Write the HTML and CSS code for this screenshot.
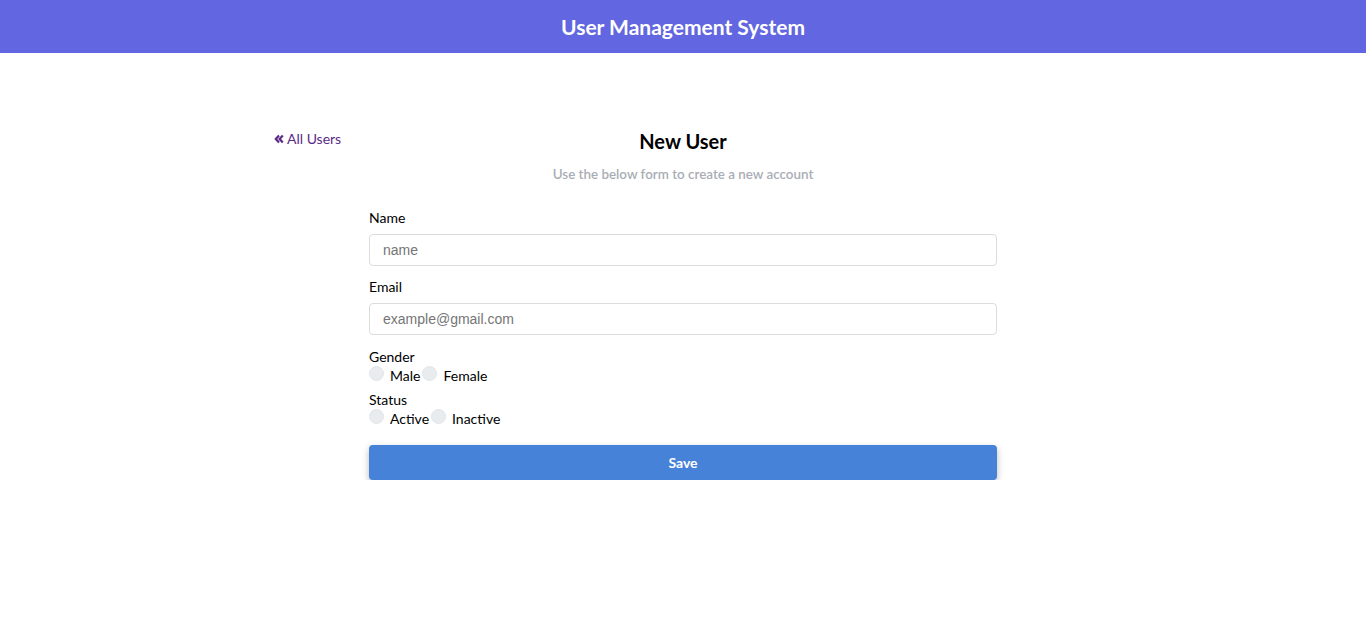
FILE: index.html
```html
<!DOCTYPE html>
<html>
<head>
<meta charset="utf-8">
<title>User Management System</title>
<link rel="stylesheet" href="styles.css">
</head>
<body>
<header class="topbar">
  <h1 class="brand">User Management System</h1>
</header>
<main class="container">
  <div class="title-row">
    <a class="back-link" href="#"><svg class="chev" viewBox="0 0 10 10" width="10" height="10"><path d="M5 1.5 L1.8 5 L5 8.5 M8.8 1.5 L5.6 5 L8.8 8.5" fill="none" stroke="#5b2a86" stroke-width="2.2"/></svg>All Users</a>
    <h2 class="page-title">New User</h2>
  </div>
  <p class="subtitle">Use the below form to create a new account</p>
  <form class="user-form">
    <div class="field">
      <label class="field-label">Name</label>
      <input class="text-input" type="text" placeholder="name">
    </div>
    <div class="field">
      <label class="field-label">Email</label>
      <input class="text-input" type="text" placeholder="example@gmail.com">
    </div>
    <div class="group">
      <div class="group-label">Gender</div>
      <div class="radios">
        <input class="radio" type="radio" name="g"><span class="radio-text">Male</span>
        <input class="radio" type="radio" name="g"><span class="radio-text">Female</span>
      </div>
    </div>
    <div class="group">
      <div class="group-label">Status</div>
      <div class="radios">
        <input class="radio" type="radio" name="s"><span class="radio-text">Active</span>
        <input class="radio" type="radio" name="s"><span class="radio-text">Inactive</span>
      </div>
    </div>
    <button class="save-btn" type="button">Save</button>
  </form>
</main>
</body>
</html>
```
FILE: styles.css
```css
* { box-sizing: border-box; }
body {
  margin: 0;
  font-family: "Lato", "Open Sans", sans-serif;
  color: #000;
  background: #fff;
}
.topbar {
  background: #6266e0;
  height: 53px;
  display: flex;
  align-items: center;
  justify-content: center;
}
.brand {
  margin: 0;
  color: #fff;
  font-size: 21px;
  font-weight: 700;
}
.container {
  width: 818px;
  margin: 0 auto;
  padding-top: 76px;
}
.title-row {
  position: relative;
  display: flex;
  justify-content: center;
  align-items: center;
  height: 24px;
}
.back-link {
  position: absolute;
  left: 0;
  top: 1px;
  color: #5b2a86;
  text-decoration: none;
  font-size: 14px;
  display: flex;
  align-items: center;
  gap: 3px;
}
.page-title {
  margin: 0;
  font-size: 20px;
  font-weight: 700;
}
.subtitle {
  text-align: center;
  color: #a9adb5;
  font-size: 13.4px;
  font-weight: 600;
  margin: 13px 0 0;
}
.user-form {
  width: 628px;
  margin: 27px auto 0;
}
.field { margin-bottom: 12px; }
.field-label {
  display: block;
  font-size: 14px;
  margin-bottom: 8px;
}
.text-input {
  display: block;
  width: 100%;
  height: 32px;
  border: 1px solid #dcdcdc;
  border-radius: 4px;
  padding: 0 13px;
  font-family: "Liberation Sans", Arial, sans-serif;
  font-size: 14px;
}
.text-input::placeholder { color: #757575; }
.group { margin-top: 13px; font-size: 14px; }
.group + .group { margin-top: 7px; }
.group-label { line-height: 17px; }
.radios { display: flex; align-items: flex-start; line-height: 17px; }
.radio {
  appearance: none;
  -webkit-appearance: none;
  width: 15px;
  height: 15px;
  border-radius: 50%;
  background: #e9ecef;
  border: 1px solid #e3e6e9;
  margin: 1px 6px 0 0;
}
.radio-text { margin-right: 2px; margin-top: 2px; }
.save-btn {
  display: block;
  width: 100%;
  height: 35px;
  margin-top: 18px;
  background: #4682d8;
  color: #fff;
  border: none;
  border-radius: 4px;
  font-family: "Lato", sans-serif;
  font-size: 14px;
  font-weight: 700;
  box-shadow: 0 3px 7px rgba(0,0,0,0.28);
}
```
